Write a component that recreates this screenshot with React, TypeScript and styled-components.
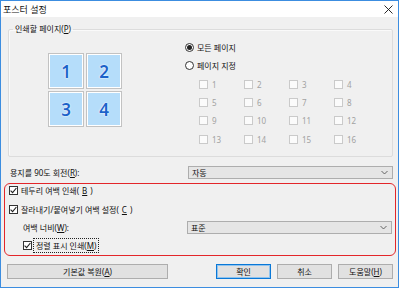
import styled, { createGlobalStyle } from "styled-components";

const GlobalStyle = createGlobalStyle`
  html, body { margin: 0; padding: 0; background: #fff; }
  body {
    font-family: "Noto Sans", "Noto Sans CJK KR", sans-serif;
    font-size: 8px;
    color: #111;
    text-autospace: no-autospace;
  }
  * { box-sizing: border-box; }
`;

const Window = styled.div`
  width: 399px;
  height: 288px;
  border: 1px solid #3c8de0;
  background: #f0f0f0;
  display: flex;
  flex-direction: column;
`;

const TitleBar = styled.div`
  height: 16px;
  background: #fff;
  display: flex;
  align-items: center;
  justify-content: space-between;
  padding: 0 5px 0 2px;
  font-size: 9px;
`;

const Body = styled.div`
  flex: 1;
  padding: 7px 5px 0 7px;
  display: flex;
  flex-direction: column;
`;

const Group = styled.fieldset`
  margin: 0;
  padding: 0;
  height: 133px;
  border: 1px solid #dcdcdc;
  border-radius: 2px;
  box-shadow: inset 1px 1px 0 #fafafa;
`;

const Legend = styled.legend`
  margin-left: 4px;
  padding: 0 2px;
  line-height: 10px;
`;

const GroupInner = styled.div`
  display: flex;
  align-items: flex-start;
`;

const Tiles = styled.div`
  margin: 19px 0 0 39px;
  display: grid;
  grid-template-columns: 36px 36px;
  grid-auto-rows: 36px;
  gap: 2px;
`;

const Tile = styled.div`
  background: #b5ddfa;
  border: 1px solid #c2c2c2;
  box-shadow: inset 0 0 0 1px #fff;
  display: flex;
  align-items: center;
  justify-content: center;
  font-weight: 600;
  font-size: 17px;
  color: #1c63c9;
  text-shadow: 0 0 2px #fff, 0 0 1px #fff;
`;

const PageOptions = styled.div`
  margin: 4px 0 0 63px;
  display: flex;
  flex-direction: column;
`;

const RadioRow = styled.label`
  height: 18px;
  display: flex;
  align-items: center;
  gap: 3px;
`;

const Radio = styled.span<{ $on?: boolean }>`
  width: 9px;
  height: 9px;
  border-radius: 50%;
  border: 1px solid #333;
  background: #fff;
  display: flex;
  align-items: center;
  justify-content: center;
  &::after {
    content: "";
    width: 5px;
    height: 5px;
    border-radius: 50%;
    background: ${({ $on }) => ($on ? "#222" : "transparent")};
  }
`;

const PageGrid = styled.div`
  margin: 1px 0 0 14px;
  display: grid;
  grid-template-columns: repeat(4, 45px);
  grid-auto-rows: 18.4px;
`;

const PageItem = styled.label`
  display: flex;
  align-items: center;
  gap: 4px;
  color: #a2a2a2;
`;

const Box = styled.span<{ $disabled?: boolean }>`
  width: 9px;
  height: 9px;
  flex: none;
  border: 1px solid ${({ $disabled }) => ($disabled ? "#cacaca" : "#333")};
  background: ${({ $disabled }) => ($disabled ? "#fbfbfb" : "#fff")};
  display: flex;
  align-items: center;
  justify-content: center;
`;

const FieldRow = styled.div<{ $top?: number; $indent?: number; $h?: number }>`
  margin-top: ${({ $top }) => $top ?? 0}px;
  padding-left: ${({ $indent }) => $indent ?? 0}px;
  height: ${({ $h }) => $h ?? 12}px;
  display: flex;
  align-items: center;
`;

const FieldLabel = styled.span`
  flex: 1;
`;

const Select = styled.div`
  width: 205px;
  height: 13px;
  background: #e5e5e5;
  border: 1px solid #adadad;
  padding: 0 4px 0 3px;
  display: flex;
  align-items: center;
  justify-content: space-between;
`;

const Highlight = styled.div`
  margin: 4px -3px 0 -4px;
  border: 1.5px solid #e3262a;
  border-radius: 6px;
  padding: 0 3px 4px 4px;
`;

const Check = styled.label`
  display: flex;
  align-items: center;
  gap: 3px;
`;

const Focus = styled.span`
  outline: 1px dotted #222;
  outline-offset: 1px;
  padding: 0 1px;
`;

const ButtonRow = styled.div`
  margin: 8px 0 0 -1px;
  display: flex;
  gap: 6px;
`;

const Button = styled.button<{ $w?: number; $primary?: boolean }>`
  width: ${({ $w }) => $w ?? 55}px;
  height: 15px;
  padding: 0;
  font: inherit;
  color: #111;
  background: #e1e1e1;
  border: 1px solid ${({ $primary }) => ($primary ? "#0a78d7" : "#adadad")};
  box-shadow: ${({ $primary }) => ($primary ? "inset 0 0 0 1px #8fc3ee" : "none")};
`;

const Spacer = styled.div`
  flex: 1;
`;

const Tick = () => (
  <svg width="7" height="7" viewBox="0 0 7 7">
    <path d="M0.6 3.6 L2.6 5.6 L6.4 1" fill="none" stroke="#222" strokeWidth="1.1" />
  </svg>
);

const Chevron = () => (
  <svg width="7" height="5" viewBox="0 0 7 5">
    <path d="M0.5 1 L3.5 4 L6.5 1" fill="none" stroke="#555" strokeWidth="0.9" />
  </svg>
);

const pages = Array.from({ length: 16 }, (_, i) => i + 1);

export default function App() {
  return (
    <>
      <GlobalStyle />
      <Window>
        <TitleBar>
          <span>포스터 설정</span>
          <svg width="9" height="9" viewBox="0 0 9 9">
            <path d="M0.5 0.5 L8.5 8.5 M8.5 0.5 L0.5 8.5" stroke="#111" strokeWidth="0.9" />
          </svg>
        </TitleBar>
        <Body>
          <Group>
            <Legend>
              인쇄할 페이지(<u>P</u>)
            </Legend>
            <GroupInner>
              <Tiles>
                {[1, 2, 3, 4].map((n) => (
                  <Tile key={n}>{n}</Tile>
                ))}
              </Tiles>
              <PageOptions>
                <RadioRow>
                  <Radio $on />
                  모든 페이지
                </RadioRow>
                <RadioRow>
                  <Radio />
                  페이지 지정
                </RadioRow>
                <PageGrid>
                  {pages.map((n) => (
                    <PageItem key={n}>
                      <Box $disabled />
                      {n}
                    </PageItem>
                  ))}
                </PageGrid>
              </PageOptions>
            </GroupInner>
          </Group>

          <FieldRow $top={8} $indent={2} $h={14}>
            <FieldLabel>
              용지를 90도 회전(<u>R</u>):
            </FieldLabel>
            <Select>
              <span>자동</span>
              <Chevron />
            </Select>
          </FieldRow>

          <Highlight>
            <FieldRow>
              <Check>
                <Box>
                  <Tick />
                </Box>
                테두리 여백 인쇄(<u>B</u>)
              </Check>
            </FieldRow>
            <FieldRow $top={7}>
              <Check>
                <Box>
                  <Tick />
                </Box>
                잘라내기/붙여넣기 여백 설정(<u>C</u>)
              </Check>
            </FieldRow>
            <FieldRow $top={5} $indent={14} $h={14}>
              <FieldLabel>
                여백 너비(<u>W</u>):
              </FieldLabel>
              <Select>
                <span>표준</span>
                <Chevron />
              </Select>
            </FieldRow>
            <FieldRow $top={5} $indent={14}>
              <Check>
                <Box>
                  <Tick />
                </Box>
                <Focus>
                  정렬 표시 인쇄(<u>M</u>)
                </Focus>
              </Check>
            </FieldRow>
          </Highlight>

          <ButtonRow>
            <Button $w={161}>
              기본값 복원(<u>A</u>)
            </Button>
            <Spacer />
            <Button $primary>확인</Button>
            <Button>취소</Button>
            <Button>
              도움말(<u>H</u>)
            </Button>
          </ButtonRow>
        </Body>
      </Window>
    </>
  );
}
